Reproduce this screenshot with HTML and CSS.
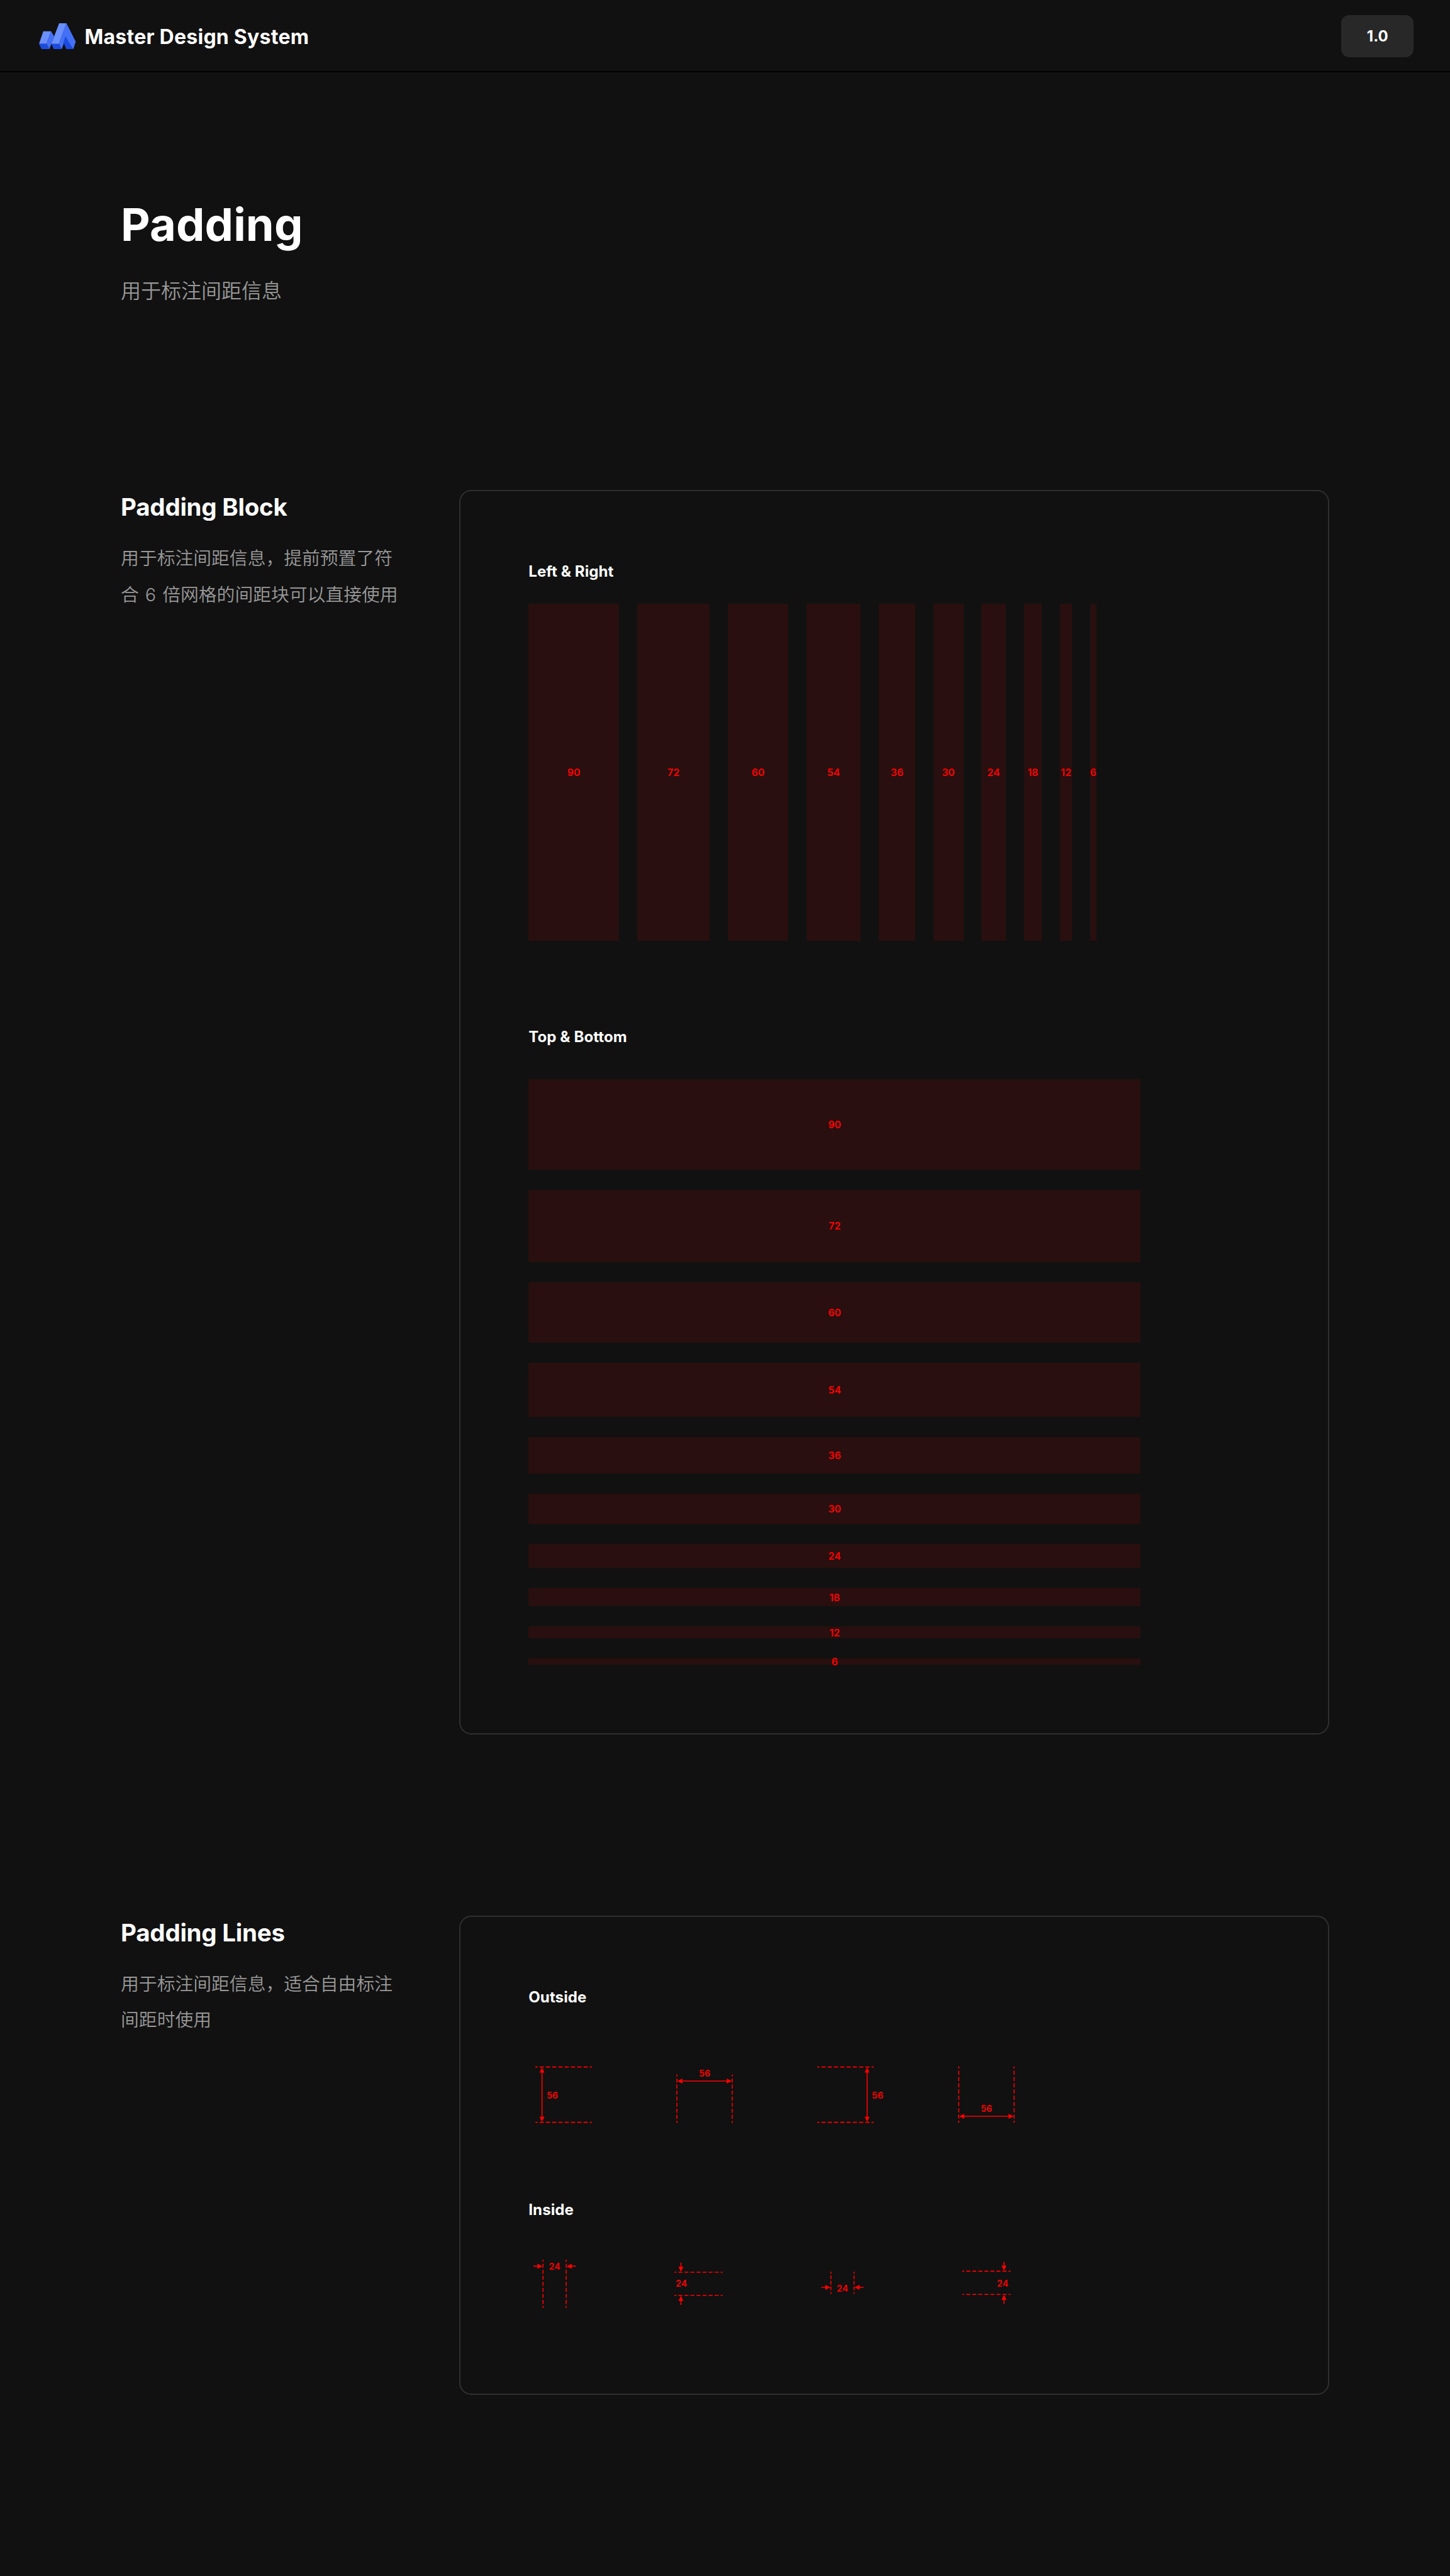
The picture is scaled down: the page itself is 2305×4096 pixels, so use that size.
FILE: index.html
```html
<!DOCTYPE html>
<html lang="zh-CN">
<head>
<meta charset="utf-8">
<title>Master Design System – Padding</title>
<link rel="stylesheet" href="styles.css">
</head>
<body>
<header class="topbar">
  <div class="brand">
    <svg class="brand-logo" viewBox="0 0 73 52" aria-hidden="true">
      <path fill="#4470f6" d="M15 41L24 16l6 10-9.500 26z"/>
      <path fill="#6a8fff" d="M8.500 16H24L15 41H0z"/>
      <path fill="#4470f6" d="M54.500 0L73 36.500 68 52 53 29 45 52 39.500 41z"/>
      <path fill="#1c4be0" d="M0 41h15l5.500 11H5.500zM24.500 41h15L45 52H29.500zM52.500 26L68 52H54.500L48.500 38z"/>
      <path fill="#6a8fff" d="M40 0h14.500L39.500 41H24.500z"/>
    </svg>
    <span class="brand-name">Master Design System</span>
  </div>
  <span class="version">1.0</span>
</header>
<main class="page">
  <section class="intro">
    <h1 class="intro-title">Padding</h1>
    <p class="intro-text">用于标注间距信息</p>
  </section>

  <section class="section">
    <div class="section-info">
      <h2 class="section-title">Padding Block</h2>
      <p class="section-text">用于标注间距信息，提前预置了符<br>合 6 倍网格的间距块可以直接使用</p>
    </div>
    <div class="card card-blocks">
      <h3 class="card-title">Left &amp; Right</h3>
      <div class="columns">
        <div class="block w90">90</div>
        <div class="block w72">72</div>
        <div class="block w60">60</div>
        <div class="block w54">54</div>
        <div class="block w36">36</div>
        <div class="block w30">30</div>
        <div class="block w24">24</div>
        <div class="block w18">18</div>
        <div class="block w12">12</div>
        <div class="block w6">6</div>
      </div>
      <h3 class="card-title">Top &amp; Bottom</h3>
      <div class="rows">
        <div class="block h90">90</div>
        <div class="block h72">72</div>
        <div class="block h60">60</div>
        <div class="block h54">54</div>
        <div class="block h36">36</div>
        <div class="block h30">30</div>
        <div class="block h24">24</div>
        <div class="block h18">18</div>
        <div class="block h12">12</div>
        <div class="block h6">6</div>
      </div>
    </div>
  </section>

  <section class="section">
    <div class="section-info">
      <h2 class="section-title">Padding Lines</h2>
      <p class="section-text">用于标注间距信息，适合自由标注<br>间距时使用</p>
    </div>
    <div class="card card-lines">
      <h3 class="card-title">Outside</h3>
      <div class="figures figures-outside">
        <svg class="figure" viewBox="0 0 280 120">
          <path class="dash long" d="M14 7H126M14 117H126"/>
          <path class="line" d="M27 16V108"/>
          <path class="tip" d="M27 8l5 10H22zM27 116l5-10H22z"/>
          <text class="num" x="47.700" y="70">56</text>
        </svg>
        <svg class="figure" viewBox="0 0 280 120">
          <path class="dash" d="M15 22V118M125 22V118"/>
          <path class="line" d="M24 35H116"/>
          <path class="tip" d="M16 35l10-5v10zM124 35l-10-5v10z"/>
          <text class="num" x="70" y="26">56</text>
        </svg>
        <svg class="figure" viewBox="0 0 280 120">
          <path class="dash long" d="M14 7H126M14 117H126"/>
          <path class="line" d="M113 16V108"/>
          <path class="tip" d="M113 8l5 10h-10zM113 116l5-10h-10z"/>
          <text class="num" x="133.700" y="70">56</text>
        </svg>
        <svg class="figure" viewBox="0 0 280 120">
          <path class="dash long" d="M15 6V118M125 6V118"/>
          <path class="line" d="M24 105H116"/>
          <path class="tip" d="M16 105l10-5v10zM124 105l-10-5v10z"/>
          <text class="num" x="70" y="96">56</text>
        </svg>
      </div>
      <h3 class="card-title">Inside</h3>
      <div class="figures figures-inside">
        <svg class="figure" viewBox="0 0 280 120">
          <path class="dash" d="M29 10V106M75 10V106"/>
          <path class="line" d="M10 23H20M84 23H94"/>
          <path class="tip" d="M28 23l-10-5v10zM76 23l10-5v10z"/>
          <text class="num" x="52" y="30">24</text>
        </svg>
        <svg class="figure" viewBox="0 0 280 120">
          <path class="dash" d="M10 35H106M10 81H106"/>
          <path class="line" d="M23 16V26M23 90V100"/>
          <path class="tip" d="M23 34l5-10H18zM23 82l5 10H18z"/>
          <text class="num" x="24" y="64">24</text>
        </svg>
        <svg class="figure" viewBox="0 0 280 120">
          <path class="dash short" d="M41 34V78M87 34V78"/>
          <path class="line" d="M22 65H32M96 65H106"/>
          <path class="tip" d="M40 65l-10-5v10zM88 65l10-5v10z"/>
          <text class="num" x="64" y="74">24</text>
        </svg>
        <svg class="figure" viewBox="0 0 280 120">
          <path class="dash" d="M22 33H118M22 79H118"/>
          <path class="line" d="M105 14V24M105 88V98"/>
          <path class="tip" d="M105 32l5-10h-10zM105 80l5 10h-10z"/>
          <text class="num" x="102.500" y="64">24</text>
        </svg>
      </div>
    </div>
  </section>
</main>
</body>
</html>
```
FILE: styles.css
```css
/* 1rem = 10 design pixels of the 1440px wide layout */
html {
  font-size: 16.005px;
}

* {
  box-sizing: border-box;
  margin: 0;
  padding: 0;
}

body {
  height: 100vh;
  overflow: hidden;
  background: #111;
  color: #fff;
  font-family: Inter, "Noto Sans CJK SC", sans-serif;
  font-optical-sizing: none;
}

.topbar {
  display: flex;
  align-items: center;
  justify-content: space-between;
  height: 7.2rem;
  padding: 2px 3.6rem 0 3.9rem;
  border-bottom: 2px solid #000;
}

.brand {
  display: flex;
  align-items: center;
  gap: 0.85rem;
}

.brand-logo {
  display: block;
  width: 3.65rem;
  height: 2.6rem;
}

.brand-name {
  padding-top: 0.2rem;
  font-size: 2rem;
  line-height: 2.8rem;
  font-weight: 700;
  letter-spacing: 0.016rem;
}

.version {
  width: 7.2rem;
  height: 4.2rem;
  border-radius: 0.8rem;
  background: #282828;
  font-size: 1.5rem;
  line-height: 4.2rem;
  font-weight: 700;
  text-align: center;
}

.page {
  padding: 0 12rem;
}

.intro {
  height: 41.5rem;
  padding-top: 12rem;
}

.intro-title {
  font-size: 4.5rem;
  line-height: 6.2rem;
  font-weight: 700;
  letter-spacing: 0.012rem;
}

.intro-text {
  margin-top: 1.7rem;
  color: #999;
  font-size: 2rem;
  line-height: 3.6rem;
  font-weight: 350;
}

.section {
  display: grid;
  grid-template-columns: 33.6rem 86.4rem;
  align-items: start;
  margin-bottom: 18rem;
}

.section-title {
  font-size: 2.4rem;
  line-height: 3.4rem;
  font-weight: 700;
  letter-spacing: -0.012rem;
}

.section-text {
  margin-top: 1.6rem;
  color: #999;
  font-size: 1.8rem;
  line-height: 3.6rem;
  font-weight: 350;
  word-spacing: 0.12rem;
  white-space: nowrap;
}

.card {
  border: 2px solid #2f2f2f;
  border-radius: 1.2rem;
  padding: calc(7rem - 2px) 0 0 calc(6.9rem - 2px);
}

.card-blocks {
  height: 123.6rem;
}

.card-lines {
  height: 47.6rem;
}

.card-title {
  font-size: 1.5rem;
  line-height: 2.2rem;
  font-weight: 700;
  letter-spacing: 0.007rem;
}

.columns {
  display: flex;
  gap: 1.8rem;
  height: 33.5rem;
  margin: 2.1rem 0 8.4rem;
}

.rows {
  display: flex;
  flex-direction: column;
  gap: 2rem;
  width: 60.8rem;
  margin-top: 3.1rem;
}

.block {
  display: flex;
  align-items: center;
  justify-content: center;
  background: rgba(255, 0, 0, 0.1);
  color: #f00;
  font-size: 1rem;
  line-height: 0;
  font-weight: 600;
}

.w90 { width: 9rem; }
.w72 { width: 7.2rem; }
.w60 { width: 6rem; }
.w54 { width: 5.4rem; }
.w36 { width: 3.6rem; }
.w30 { width: 3rem; }
.w24 { width: 2.4rem; }
.w18 { width: 1.8rem; }
.w12 { width: 1.2rem; }
.w6 { width: 0.6rem; }

.h90 { height: 9rem; }
.h72 { height: 7.2rem; }
.h60 { height: 6rem; }
.h54 { height: 5.4rem; }
.h36 { height: 3.6rem; }
.h30 { height: 3rem; }
.h24 { height: 2.4rem; }
.h18 { height: 1.8rem; }
.h12 { height: 1.2rem; }
.h6 { height: 0.6rem; }

.figures {
  display: flex;
}

.figures-outside {
  margin: 5.5rem 0 7.45rem;
}

.figures-inside {
  margin-top: 3.35rem;
}

.figure {
  display: block;
  width: 14rem;
  height: 6rem;
}

.dash,
.line {
  fill: none;
  stroke: #f00;
  stroke-width: 2;
}

.dash {
  stroke-dasharray: 8 4;
  stroke-dashoffset: 4;
}

.dash.long {
  stroke-dasharray: 8.296 4.148;
  stroke-dashoffset: 4.148;
}

.dash.short {
  stroke-dasharray: 7.333 3.667;
  stroke-dashoffset: 3.667;
}

.tip,
.num {
  fill: #f00;
}

.num {
  font-size: 18px;
  font-weight: 600;
  text-anchor: middle;
}
```
